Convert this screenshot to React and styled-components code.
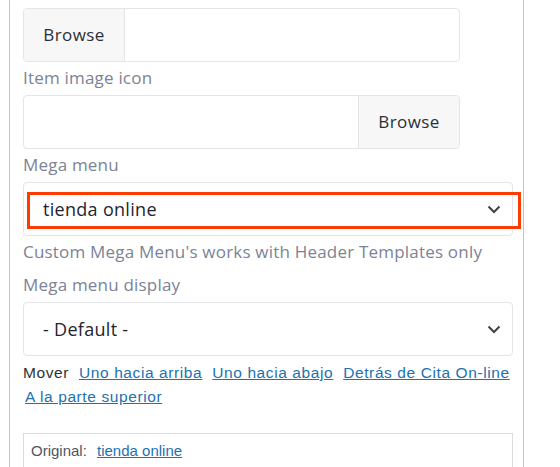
import React from 'react';
import styled, { createGlobalStyle } from 'styled-components';

const Global = createGlobalStyle`
  html, body { margin: 0; padding: 0; background: #fff; }
  body { overflow: hidden; }
`;

const Panel = styled.div`
  margin-left: 9px;
  width: 515px;
  height: 467px;
  overflow: hidden;
  border-left: 1px solid #c3c4c7;
  border-right: 1px solid #c3c4c7;
  padding: 8px 0 0 13px;
  box-sizing: border-box;
  font-family: "Open Sans", sans-serif;
`;

const Group = styled.div`
  display: flex;
  width: ${p => p.$w}px;
  height: 54px;
  box-sizing: border-box;
  border: 1px solid #e3e5e8;
  border-radius: 4px;
  overflow: hidden;
`;

const BrowseBtn = styled.button`
  width: 101px;
  flex: none;
  background: #f7f7f7;
  border: none;
  ${p => (p.$right ? 'border-left' : 'border-right')}: 1px solid #e3e5e8;
  font-family: "Open Sans", sans-serif;
  font-size: 17px;
  letter-spacing: 0.4px;
  color: #2a2f3a;
  padding: 0 0 2px;
`;

const Field = styled.div`
  flex: 1;
`;

const Label = styled.div`
  height: 33px;
  line-height: 31px;
  padding-bottom: 2px;
  box-sizing: border-box;
  font-size: 17px;
  letter-spacing: 0.2px;
  color: #7b8396;
  white-space: nowrap;
`;

const Select = styled.div`
  position: relative;
  width: 490px;
  height: 54px;
  box-sizing: border-box;
  border: 1px solid #e3e5e8;
  border-radius: 4px;
  display: flex;
  align-items: center;
  justify-content: space-between;
  padding: 0 11px 0 19px;
  font-size: 18px;
  letter-spacing: 0.3px;
  color: #1f2430;
`;

const Highlight = styled.div`
  position: absolute;
  left: 3px;
  top: 9px;
  width: 494px;
  height: 37px;
  box-sizing: border-box;
  border: 3px solid #fc3d03;
  pointer-events: none;
`;

const Mover = styled.div`
  width: 495px;
  margin-top: 5px;
  font-family: "Liberation Sans", Arial, sans-serif;
  font-size: 15.5px;
  letter-spacing: 0.6px;
  line-height: 24px;
  color: #2c3338;
  white-space: nowrap;
`;

const Link = styled.a`
  color: #2271b1;
  text-decoration: underline;
  margin-left: ${p => p.$ml ?? 5}px;
`;

const Original = styled.div`
  margin-top: 24px;
  width: 490px;
  height: 60px;
  box-sizing: border-box;
  border: 1px solid #dcdcde;
  border-bottom: none;
  padding: 8px 0 0 7px;
  font-family: "Liberation Sans", Arial, sans-serif;
  font-size: 15px;
  color: #50575e;
`;

const Chevron = () => (
  <svg width="14" height="9" viewBox="0 0 14 9" fill="none">
    <path d="M1.5 1.5 L7 7 L12.5 1.5" stroke="#3c434a" strokeWidth="2" />
  </svg>
);

export default function App() {
  return (
    <>
      <Global />
      <Panel>
        <Group $w={437}>
          <BrowseBtn>Browse</BrowseBtn>
          <Field />
        </Group>
        <Label>Item image icon</Label>
        <Group $w={437}>
          <Field />
          <BrowseBtn $right>Browse</BrowseBtn>
        </Group>
        <Label>Mega menu</Label>
        <Select>
          <span>tienda online</span>
          <Chevron />
          <Highlight />
        </Select>
        <Label>Custom Mega Menu's works with Header Templates only</Label>
        <Label>Mega menu display</Label>
        <Select>
          <span>- Default -</span>
          <Chevron />
        </Select>
        <Mover>
          Mover <Link href="#">Uno hacia arriba</Link> <Link href="#">Uno hacia abajo</Link>{' '}
          <Link href="#">Detrás de Cita On-line</Link>
          <br />
          <Link href="#" $ml={2}>A la parte superior</Link>
        </Mover>
        <Original>
          Original: <Link href="#" $ml={6}>tienda online</Link>
        </Original>
      </Panel>
    </>
  );
}
